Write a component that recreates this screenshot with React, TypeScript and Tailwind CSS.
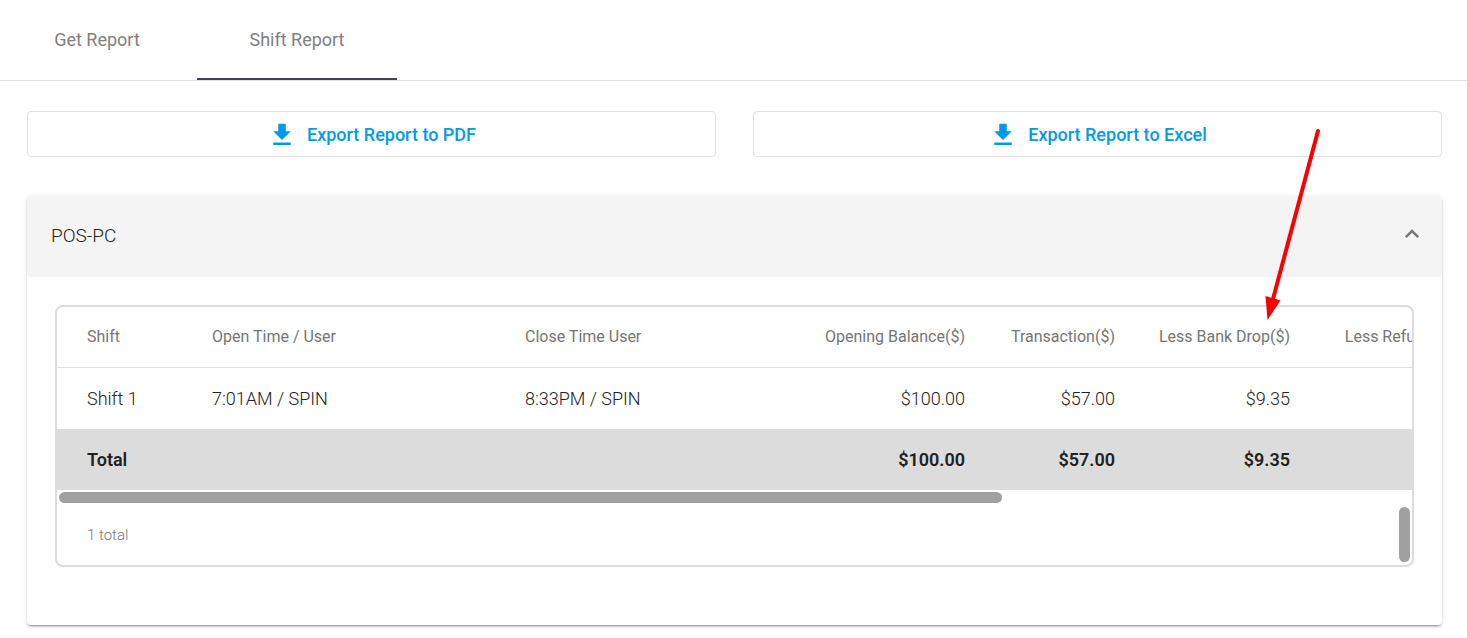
import { useState } from "react";
import { MdFileDownload, MdExpandLess, MdExpandMore } from "react-icons/md";

const tabs = ["Get Report", "Shift Report"];
const formats = ["PDF", "Excel"];

const columns = [
  { title: "Shift", width: "w-[125px]", cell: "pl-[30px] text-left" },
  { title: "Open Time / User", width: "w-[313px]", cell: "pl-[30px] text-left" },
  { title: "Close Time User", width: "w-[312px]", cell: "pl-[30px] text-left" },
  { title: "Opening Balance($)", width: "w-[179px]", cell: "pr-[21px] text-right" },
  { title: "Transaction($)", width: "w-[150px]", cell: "pr-[21px] text-right" },
  { title: "Less Bank Drop($)", width: "w-[175px]", cell: "pr-[21px] text-right" },
  { title: "Less Refund($)", width: "w-[163px]", cell: "pr-[21px] text-right" },
];

const rows = [["Shift 1", "7:01AM / SPIN", "8:33PM / SPIN", "$100.00", "$57.00", "$9.35", ""]];
const totals = ["Total", "", "", "$100.00", "$57.00", "$9.35", ""];

function Tabs() {
  const [active, setActive] = useState(1);
  return (
    <nav className="border-b border-[#e0e0e0]">
      <div role="tablist" className="-ml-[3px] flex">
        {tabs.map((tab, i) => (
          <button
            key={tab}
            role="tab"
            aria-selected={i === active}
            onClick={() => setActive(i)}
            className={`h-20 w-[200px] border-b-2 text-[18px] text-[#7f7f7f] ${
              i === active ? "border-[#424153]" : "border-transparent"
            }`}
          >
            {tab}
          </button>
        ))}
      </div>
    </nav>
  );
}

function ShiftTable() {
  return (
    <div className="overflow-hidden rounded-lg border-2 border-[#dcdcdc]">
      <div className="overflow-hidden">
        <table className="w-[1941px] table-fixed border-collapse">
          <colgroup>
            {columns.map((c) => (
              <col key={c.title} className={c.width} />
            ))}
            <col />
          </colgroup>
          <thead>
            <tr className="h-[60px] border-b border-[#e0e0e0] text-[16px] text-[#757575]">
              {columns.map((c) => (
                <th key={c.title} scope="col" className={`font-normal whitespace-nowrap ${c.cell}`}>
                  {c.title}
                </th>
              ))}
              <td />
            </tr>
          </thead>
          <tbody className="text-[18px] text-[#212121]">
            {rows.map((row) => (
              <tr key={row[0]} className="h-[62px] font-light">
                {row.map((value, i) => (
                  <td key={columns[i].title} className={columns[i].cell}>
                    {value}
                  </td>
                ))}
                <td />
              </tr>
            ))}
            <tr className="h-[61px] bg-[#dcdcdc] font-semibold">
              {totals.map((value, i) => (
                <td key={columns[i].title} className={columns[i].cell}>
                  {value}
                </td>
              ))}
              <td />
            </tr>
          </tbody>
        </table>
      </div>
      <div className="px-[2px] pt-[2px]">
        <div className="h-[11px] w-[69.8%] rounded-full bg-[#a0a0a0]" />
      </div>
      <div className="flex items-start justify-between pt-1 pr-[2px] pb-[3px] pl-[30px]">
        <p className="pt-4 text-[15px] leading-6 font-light text-[#757575]">1 total</p>
        <div className="h-[55px] w-[11px] rounded-full bg-[#a0a0a0]" />
      </div>
    </div>
  );
}

export default function App() {
  const [open, setOpen] = useState(true);
  return (
    <div className="relative overflow-hidden bg-white pb-3 font-[Roboto,sans-serif]">
      <Tabs />
      <main className="pt-[30px] pr-[25px] pl-[27px]">
        <div className="grid grid-cols-2 gap-[37px]">
          {formats.map((format) => (
            <button
              key={format}
              className="flex h-[46px] items-center justify-center gap-2.5 rounded border border-[#e0e0e0] text-[18px] font-medium text-[#039be5]"
            >
              <MdFileDownload className="mt-0.5 size-[30px]" aria-hidden="true" />
              <span>Export Report to {format}</span>
            </button>
          ))}
        </div>

        <section className="mt-[39px] rounded bg-white shadow-[0_3px_1px_-2px_rgba(0,0,0,0.2),0_2px_2px_0_rgba(0,0,0,0.14),0_1px_5px_0_rgba(0,0,0,0.12)]">
          <button
            aria-expanded={open}
            onClick={() => setOpen(!open)}
            className="flex h-[81px] w-full items-center justify-between rounded bg-[#f4f4f4] pr-4 pl-6 text-[19px] font-light text-[#212121]"
          >
            <span>POS-PC</span>
            {open ? (
              <MdExpandLess className="mb-[5px] size-7 text-[#757575]" aria-hidden="true" />
            ) : (
              <MdExpandMore className="mb-[5px] size-7 text-[#757575]" aria-hidden="true" />
            )}
          </button>
          {open && (
            <div className="px-7 pt-7 pb-[58px]">
              <ShiftTable />
            </div>
          )}
        </section>
      </main>

      <svg
        className="pointer-events-none absolute top-[126px] right-[145px]"
        width="60"
        height="196"
        viewBox="0 0 60 196"
        aria-hidden="true"
      >
        <path d="M56 5 L11 173" stroke="#fb0000" strokeWidth="4" strokeLinecap="round" />
        <path d="M3.5 170 L18.5 174.500 L5.500 194 Z" fill="#fb0000" />
      </svg>
    </div>
  );
}
